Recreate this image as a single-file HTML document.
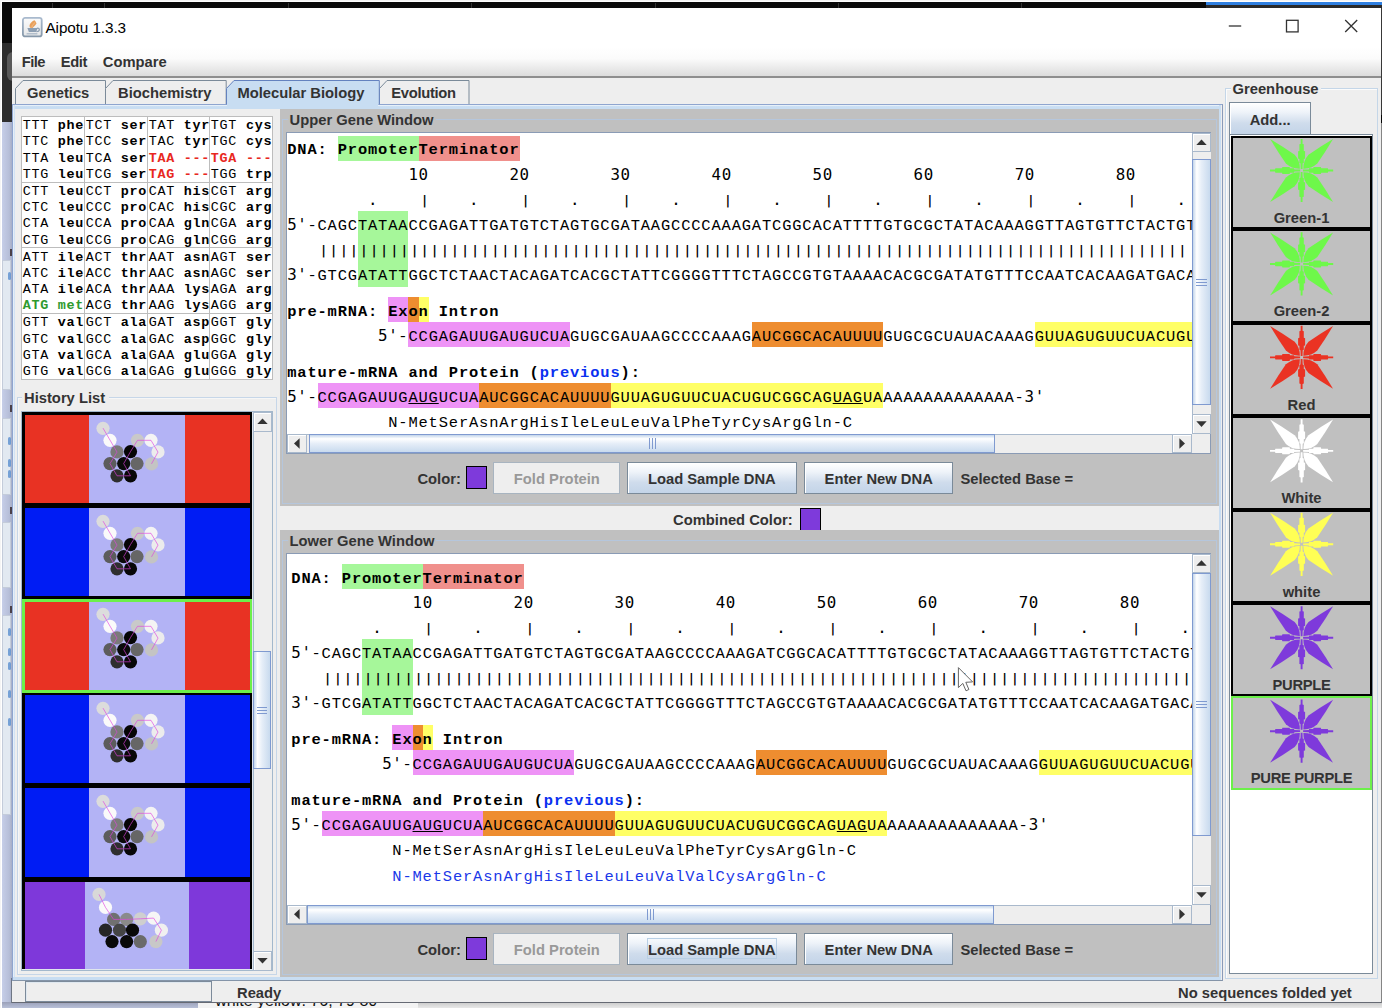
<!DOCTYPE html>
<html><head><meta charset="utf-8"><title>Aipotu 1.3.3</title>
<style>
html,body{margin:0;padding:0}
body{width:1382px;height:1008px;overflow:hidden;position:relative;background:#eee;font-family:"Liberation Sans",sans-serif}
div{position:absolute;box-sizing:border-box}
svg{position:absolute;overflow:visible}
.b{font-weight:bold;font-size:14.75px;color:#333;white-space:nowrap;line-height:18px;height:18px}
.m{font-family:"Liberation Mono",monospace;font-size:15.4px;letter-spacing:0.865px;white-space:pre;color:#000;line-height:25.2px;height:25.2px}
.m b{font-weight:bold}
.m i,.m .k{line-height:0}
.m i{font-style:normal;font-family:"DejaVu Sans Mono","Liberation Mono",monospace;font-size:15.8px;letter-spacing:0.593px}
.m .k{font-weight:bold;font-family:"DejaVu Sans Mono","Liberation Mono",monospace;font-size:12px;letter-spacing:2.880px;position:relative;top:0.2px;left:2.45px}
.c{font-family:"Liberation Mono",monospace;font-size:13.4px;letter-spacing:0.74px;white-space:pre;color:#000;line-height:16.45px;height:16.45px}
.c b{font-weight:bold}
.btn{border:1px solid #7a8a99;background:linear-gradient(#ffffff 0%,#e3ecf6 35%,#c8d8ea 100%);text-align:center}
.btn .b{position:static;display:inline-block}
.hl{}
</style></head>
<body>
<div style="left:0px;top:0px;width:1382px;height:1008px;background:#f5f5f5"></div>
<div style="left:1px;top:1px;width:1381px;height:1.2px;background:#fff"></div>
<div style="left:1px;top:1px;width:1.2px;height:1007px;background:#fff"></div>
<div style="left:2px;top:2px;width:1380px;height:42px;background:#0a0a0a"></div>
<div style="left:1206px;top:5px;width:176px;height:3px;background:#2a2a2a"></div>
<div style="left:1206px;top:2px;width:176px;height:3px;background:#2f7fe0"></div>
<div style="left:52px;top:3px;width:1px;height:5px;background:#333"></div>
<div style="left:104px;top:3px;width:1px;height:5px;background:#333"></div>
<div style="left:288px;top:3px;width:1px;height:5px;background:#333"></div>
<div style="left:471px;top:3px;width:1px;height:5px;background:#333"></div>
<div style="left:655px;top:3px;width:1px;height:5px;background:#333"></div>
<div style="left:838px;top:3px;width:1px;height:5px;background:#333"></div>
<div style="left:1021px;top:3px;width:1px;height:5px;background:#333"></div>
<div style="left:2px;top:43px;width:12px;height:80px;background:#2e2e2e"></div>
<div style="left:7px;top:52px;width:12px;height:29px;background:#5a5a5a;border-radius:14px"></div>
<div style="left:2px;top:122px;width:12px;height:886px;background:linear-gradient(90deg,#c6cee8 0%,#b6bed8 60%,#9aa2ba 100%)"></div>
<div style="left:2.3px;top:260px;width:9px;height:130px;background:#e2e9f1;border:1px solid #c4ccda"></div>
<div style="left:2.3px;top:417.5px;width:9px;height:77.5px;background:#e2e9f1;border:1px solid #c4ccda"></div>
<div style="left:2.3px;top:522px;width:9px;height:66px;background:#e2e9f1;border:1px solid #c4ccda"></div>
<div style="left:2.3px;top:615px;width:9px;height:200px;background:#e2e9f1;border:1px solid #c4ccda"></div>
<div style="left:8px;top:272px;width:3px;height:8px;background:#5a8fd0;border-radius:2px;opacity:0.8"></div>
<div style="left:8px;top:437px;width:3px;height:8px;background:#5a8fd0;border-radius:2px;opacity:0.8"></div>
<div style="left:8px;top:459px;width:3px;height:8px;background:#5a8fd0;border-radius:2px;opacity:0.8"></div>
<div style="left:8px;top:470px;width:3px;height:8px;background:#5a8fd0;border-radius:2px;opacity:0.8"></div>
<div style="left:8px;top:628px;width:3px;height:8px;background:#5a8fd0;border-radius:2px;opacity:0.8"></div>
<div style="left:8px;top:648px;width:3px;height:8px;background:#5a8fd0;border-radius:2px;opacity:0.8"></div>
<div style="left:8px;top:662px;width:3px;height:8px;background:#5a8fd0;border-radius:2px;opacity:0.8"></div>
<div style="left:8px;top:690px;width:3px;height:8px;background:#5a8fd0;border-radius:2px;opacity:0.8"></div>
<div style="left:8px;top:718px;width:3px;height:8px;background:#5a8fd0;border-radius:2px;opacity:0.8"></div>
<div style="left:9.5px;top:249px;width:2px;height:7px;background:#4a4048"></div>
<div style="left:9.5px;top:405px;width:2px;height:7px;background:#4a4048"></div>
<div style="left:9.5px;top:507px;width:2px;height:7px;background:#4a4048"></div>
<div style="left:9.5px;top:606px;width:2px;height:7px;background:#4a4048"></div>
<div style="left:2px;top:1002px;width:1380px;height:6px;background:linear-gradient(#9aa0b8,#b8c0d8)"></div>
<div style="left:198px;top:1002px;width:1184px;height:6px;background:linear-gradient(#c8c8c8,#e8e8e8)"></div>
<div style="left:198px;top:1002px;width:220px;height:6px;background:#f3f3f3"></div>
<div style="left:215.3px;top:992px;font-size:16px;color:#111;white-space:nowrap;line-height:18px">white yellow: 76, 79 80</div>
<div style="left:11.9px;top:8px;width:1370.1px;height:994.6px;background:#eeeeee;border-right:1.4px solid #858585;border-bottom:1.6px solid #666a74"></div>
<div style="left:11.3px;top:978px;width:1.2px;height:25px;background:#6e7684"></div>
<div style="left:12px;top:8px;width:1369px;height:39px;background:#fff"></div>
<svg style="left:21.9px;top:16.5px" width="20.6" height="20.3" viewBox="0 0 20.6 20.3">
<defs><linearGradient id="ig" x1="0" y1="0" x2="0" y2="1"><stop offset="0" stop-color="#fbfbfb"/><stop offset="1" stop-color="#e4e6e8"/></linearGradient>
<linearGradient id="ib" x1="0" y1="0" x2="0" y2="1"><stop offset="0" stop-color="#a9bace"/><stop offset="1" stop-color="#8698aa"/></linearGradient></defs>
<rect x="0.9" y="0.9" width="18.8" height="18.5" rx="2.2" fill="url(#ig)" stroke="url(#ib)" stroke-width="1.8"/>
<path d="M8.2 10.8 C6 8 9.5 4.5 12.4 3.2 C14 4 13.5 5.2 14.6 6.2 C13.5 8.4 11.5 9.8 10.6 11 Z" fill="#e9a05a"/>
<path d="M10 10.2 C9.8 8 12 6.6 13.2 5.4" stroke="#f3c79c" stroke-width="0.7" fill="none"/>
<path d="M5.4 11 H15.6 L14.2 15.1 H6.9 Z" fill="#8d9fb3"/>
<path d="M15 11.3 C18.2 10.6 18.2 14.6 14.4 14.6" stroke="#8d9fb3" stroke-width="1.3" fill="none"/>
<path d="M4.6 16.8 H15.4" stroke="#a7b5c5" stroke-width="1.2"/>
</svg>
<div style="left:45.5px;top:19px;font-size:15.3px;color:#000;white-space:nowrap;line-height:18px;letter-spacing:-0.1px">Aipotu 1.3.3</div>
<svg style="left:1220px;top:8px" width="160" height="38" viewBox="0 0 160 38">
<path d="M8.8 18 H21.2" stroke="#333" stroke-width="1.3"/>
<rect x="66.5" y="12.3" width="11.6" height="11.6" fill="none" stroke="#333" stroke-width="1.3"/>
<path d="M125.2 12 L137.2 24 M137.2 12 L125.2 24" stroke="#333" stroke-width="1.3"/>
</svg>
<div style="left:12px;top:47px;width:1369px;height:30.7px;background:linear-gradient(#ffffff 0%,#fbfbfb 40%,#dcdcdc 100%);border-bottom:2px solid #8e8e8e"></div>
<div class="b" style="left:21.7px;top:52.8px;letter-spacing:-0.55px">File</div>
<div class="b" style="left:60.8px;top:52.8px;letter-spacing:-0.45px">Edit</div>
<div class="b" style="left:102.8px;top:52.8px;">Compare</div>
<div style="left:1380.6px;top:8px;width:1.4px;height:107px;background:#383838"></div>
<div style="left:1380.6px;top:114.7px;width:1.4px;height:8px;background:#050505"></div>
<svg style="left:15px;top:80px" width="91" height="25" viewBox="0 0 91 25"><path d="M0.5 24.5 V8.5 L8 0.5 H90.5 V24.5" fill="#eeeeee" stroke="#7a8a99" stroke-width="1"/></svg>
<div class="b" style="left:27px;top:83.5px;">Genetics</div>
<svg style="left:105px;top:80px" width="121.69999999999999" height="25" viewBox="0 0 121.69999999999999 25"><path d="M0.5 24.5 V8.5 L8 0.5 H121.19999999999999 V24.5" fill="#eeeeee" stroke="#7a8a99" stroke-width="1"/></svg>
<div class="b" style="left:118px;top:83.5px;">Biochemistry</div>
<svg style="left:379px;top:80px" width="90.5" height="25" viewBox="0 0 90.5 25"><path d="M0.5 24.5 V8.5 L8 0.5 H90.0 V24.5" fill="#eeeeee" stroke="#7a8a99" stroke-width="1"/></svg>
<div class="b" style="left:391.3px;top:83.5px;letter-spacing:-0.3px">Evolution</div>
<div style="left:11.8px;top:104px;width:1210.8px;height:877.3px;background:#eeeeee;border:1.4px solid #8fa5cf;border-bottom-color:#8494a8;border-right-color:#8a9ab8"></div>
<div style="left:13.2px;top:105.4px;width:1208px;height:4px;background:linear-gradient(#f4f8fc 0%,#c8ddf2 40%,#c8ddf2 100%)"></div>
<div style="left:13.2px;top:105.4px;width:1.9px;height:874.5px;background:linear-gradient(90deg,#eef4fb,#c8ddf2)"></div>
<div style="left:1218.8px;top:105.4px;width:2.4px;height:874.5px;background:#c8ddf2"></div>
<div style="left:13.2px;top:977px;width:1208px;height:3px;background:#c8ddf2"></div>
<svg style="left:226.2px;top:80px" width="153.8" height="25" viewBox="0 0 153.8 25"><path d="M0.5 24.5 V8.5 L8 0.5 H153.3 V24.5" fill="#c8ddf2" stroke="#6382bf" stroke-width="1"/></svg>
<div class="b" style="left:237.4px;top:83.5px;">Molecular Biology</div>
<div style="left:226.9px;top:103px;width:151.6px;height:3.6px;background:#c8ddf2"></div>
<div style="left:21.1px;top:116.0px;width:251.79999999999998px;height:264.3px;background:#fff;border:1px solid #b8b8b8"></div>
<div style="left:21.1px;top:116.0px;width:63.99999999999999px;height:66.7px;border:1px solid #bdbdbd"></div>
<div class="c" style="left:22.7px;top:118.20px;">TTT <b>phe</b></div>
<div class="c" style="left:22.7px;top:134.40px;">TTC <b>phe</b></div>
<div class="c" style="left:22.7px;top:150.60px;">TTA <b>leu</b></div>
<div class="c" style="left:22.7px;top:166.80px;">TTG <b>leu</b></div>
<div style="left:84.1px;top:116.0px;width:64.0px;height:66.7px;border:1px solid #bdbdbd"></div>
<div class="c" style="left:85.7px;top:118.20px;">TCT <b>ser</b></div>
<div class="c" style="left:85.7px;top:134.40px;">TCC <b>ser</b></div>
<div class="c" style="left:85.7px;top:150.60px;">TCA <b>ser</b></div>
<div class="c" style="left:85.7px;top:166.80px;">TCG <b>ser</b></div>
<div style="left:147.1px;top:116.0px;width:63.099999999999994px;height:66.7px;border:1px solid #bdbdbd"></div>
<div class="c" style="left:148.7px;top:118.20px;">TAT <b>tyr</b></div>
<div class="c" style="left:148.7px;top:134.40px;">TAC <b>tyr</b></div>
<div class="c" style="left:148.7px;top:150.60px;color:#e8281e;"><b>TAA ---</b></div>
<div class="c" style="left:148.7px;top:166.80px;color:#e8281e;"><b>TAG ---</b></div>
<div style="left:209.2px;top:116.0px;width:63.5px;height:66.7px;border:1px solid #bdbdbd"></div>
<div class="c" style="left:210.8px;top:118.20px;">TGT <b>cys</b></div>
<div class="c" style="left:210.8px;top:134.40px;">TGC <b>cys</b></div>
<div class="c" style="left:210.8px;top:150.60px;color:#e8281e;"><b>TGA ---</b></div>
<div class="c" style="left:210.8px;top:166.80px;">TGG <b>trp</b></div>
<div style="left:21.1px;top:181.7px;width:63.99999999999999px;height:66.7px;border:1px solid #bdbdbd"></div>
<div class="c" style="left:22.7px;top:183.90px;">CTT <b>leu</b></div>
<div class="c" style="left:22.7px;top:200.10px;">CTC <b>leu</b></div>
<div class="c" style="left:22.7px;top:216.30px;">CTA <b>leu</b></div>
<div class="c" style="left:22.7px;top:232.50px;">CTG <b>leu</b></div>
<div style="left:84.1px;top:181.7px;width:64.0px;height:66.7px;border:1px solid #bdbdbd"></div>
<div class="c" style="left:85.7px;top:183.90px;">CCT <b>pro</b></div>
<div class="c" style="left:85.7px;top:200.10px;">CCC <b>pro</b></div>
<div class="c" style="left:85.7px;top:216.30px;">CCA <b>pro</b></div>
<div class="c" style="left:85.7px;top:232.50px;">CCG <b>pro</b></div>
<div style="left:147.1px;top:181.7px;width:63.099999999999994px;height:66.7px;border:1px solid #bdbdbd"></div>
<div class="c" style="left:148.7px;top:183.90px;">CAT <b>his</b></div>
<div class="c" style="left:148.7px;top:200.10px;">CAC <b>his</b></div>
<div class="c" style="left:148.7px;top:216.30px;">CAA <b>gln</b></div>
<div class="c" style="left:148.7px;top:232.50px;">CAG <b>gln</b></div>
<div style="left:209.2px;top:181.7px;width:63.5px;height:66.7px;border:1px solid #bdbdbd"></div>
<div class="c" style="left:210.8px;top:183.90px;">CGT <b>arg</b></div>
<div class="c" style="left:210.8px;top:200.10px;">CGC <b>arg</b></div>
<div class="c" style="left:210.8px;top:216.30px;">CGA <b>arg</b></div>
<div class="c" style="left:210.8px;top:232.50px;">CGG <b>arg</b></div>
<div style="left:21.1px;top:247.4px;width:63.99999999999999px;height:66.7px;border:1px solid #bdbdbd"></div>
<div class="c" style="left:22.7px;top:249.60px;">ATT <b>ile</b></div>
<div class="c" style="left:22.7px;top:265.80px;">ATC <b>ile</b></div>
<div class="c" style="left:22.7px;top:282.00px;">ATA <b>ile</b></div>
<div class="c" style="left:22.7px;top:298.20px;color:#2e9a2e;"><b>ATG met</b></div>
<div style="left:84.1px;top:247.4px;width:64.0px;height:66.7px;border:1px solid #bdbdbd"></div>
<div class="c" style="left:85.7px;top:249.60px;">ACT <b>thr</b></div>
<div class="c" style="left:85.7px;top:265.80px;">ACC <b>thr</b></div>
<div class="c" style="left:85.7px;top:282.00px;">ACA <b>thr</b></div>
<div class="c" style="left:85.7px;top:298.20px;">ACG <b>thr</b></div>
<div style="left:147.1px;top:247.4px;width:63.099999999999994px;height:66.7px;border:1px solid #bdbdbd"></div>
<div class="c" style="left:148.7px;top:249.60px;">AAT <b>asn</b></div>
<div class="c" style="left:148.7px;top:265.80px;">AAC <b>asn</b></div>
<div class="c" style="left:148.7px;top:282.00px;">AAA <b>lys</b></div>
<div class="c" style="left:148.7px;top:298.20px;">AAG <b>lys</b></div>
<div style="left:209.2px;top:247.4px;width:63.5px;height:66.7px;border:1px solid #bdbdbd"></div>
<div class="c" style="left:210.8px;top:249.60px;">AGT <b>ser</b></div>
<div class="c" style="left:210.8px;top:265.80px;">AGC <b>ser</b></div>
<div class="c" style="left:210.8px;top:282.00px;">AGA <b>arg</b></div>
<div class="c" style="left:210.8px;top:298.20px;">AGG <b>arg</b></div>
<div style="left:21.1px;top:313.1px;width:63.99999999999999px;height:66.7px;border:1px solid #bdbdbd"></div>
<div class="c" style="left:22.7px;top:315.30px;">GTT <b>val</b></div>
<div class="c" style="left:22.7px;top:331.50px;">GTC <b>val</b></div>
<div class="c" style="left:22.7px;top:347.70px;">GTA <b>val</b></div>
<div class="c" style="left:22.7px;top:363.90px;">GTG <b>val</b></div>
<div style="left:84.1px;top:313.1px;width:64.0px;height:66.7px;border:1px solid #bdbdbd"></div>
<div class="c" style="left:85.7px;top:315.30px;">GCT <b>ala</b></div>
<div class="c" style="left:85.7px;top:331.50px;">GCC <b>ala</b></div>
<div class="c" style="left:85.7px;top:347.70px;">GCA <b>ala</b></div>
<div class="c" style="left:85.7px;top:363.90px;">GCG <b>ala</b></div>
<div style="left:147.1px;top:313.1px;width:63.099999999999994px;height:66.7px;border:1px solid #bdbdbd"></div>
<div class="c" style="left:148.7px;top:315.30px;">GAT <b>asp</b></div>
<div class="c" style="left:148.7px;top:331.50px;">GAC <b>asp</b></div>
<div class="c" style="left:148.7px;top:347.70px;">GAA <b>glu</b></div>
<div class="c" style="left:148.7px;top:363.90px;">GAG <b>glu</b></div>
<div style="left:209.2px;top:313.1px;width:63.5px;height:66.7px;border:1px solid #bdbdbd"></div>
<div class="c" style="left:210.8px;top:315.30px;">GGT <b>gly</b></div>
<div class="c" style="left:210.8px;top:331.50px;">GGC <b>gly</b></div>
<div class="c" style="left:210.8px;top:347.70px;">GGA <b>gly</b></div>
<div class="c" style="left:210.8px;top:363.90px;">GGG <b>gly</b></div>
<div style="left:17.3px;top:396.8px;width:260px;height:578.5px;border:1.5px solid #c6d6e8;box-shadow:inset 1px 1px 0 #f6f6f6"></div>
<div style="left:22px;top:388px;width:87px;height:18px;background:#eee"></div>
<div class="b" style="left:24px;top:388.5px;">History List</div>
<div style="left:21px;top:411px;width:252px;height:560px;background:#dfe6ee;border:1px solid #a3b8cc"></div>
<div style="left:21.6px;top:412.3px;width:230.4px;height:557.2px;background:#000"></div>
<div style="left:24.8px;top:414.95px;width:225.2px;height:88.10000000000002px;background:#e83223"></div>
<div style="left:89.3px;top:414.95px;width:95.7px;height:88.10000000000002px;background:#b3b3f5"></div>
<svg style="left:89px;top:414.9px" width="97" height="88.1"><circle cx="14.0" cy="13.3" r="6.6" fill="#dcdcdc"/><circle cx="21.0" cy="25.3" r="6.6" fill="#fafafa"/><circle cx="48.5" cy="25.3" r="6.6" fill="#c9c9c9"/><circle cx="62.0" cy="25.3" r="6.6" fill="#f4f4f4"/><circle cx="28.0" cy="36.9" r="6.6" fill="#7a7a7a"/><circle cx="41.5" cy="36.6" r="6.6" fill="#050505"/><circle cx="69.0" cy="36.9" r="6.6" fill="#ececec"/><circle cx="21.0" cy="48.6" r="6.6" fill="#5c5c5c"/><circle cx="34.7" cy="48.6" r="6.6" fill="#0a0a0a"/><circle cx="48.0" cy="48.6" r="6.6" fill="#666"/><circle cx="62.5" cy="48.9" r="6.6" fill="#c4c4c4"/><circle cx="28.0" cy="60.8" r="6.6" fill="#2e2e2e"/><circle cx="41.5" cy="60.8" r="6.6" fill="#080808"/><polyline points="14.0,13.1 21.0,25.1 28.0,37.1 21.0,48.6 28.0,60.8 41.5,60.8 34.7,48.6 41.5,36.6 48.5,25.3 62.0,25.3 69.0,37.1 62.5,48.9" fill="none" stroke="#e040e0" stroke-width="0.8" opacity="0.8"/></svg>
<div style="left:24.8px;top:507.95px;width:225.2px;height:88.30000000000001px;background:#001cf4"></div>
<div style="left:89.3px;top:507.95px;width:95.7px;height:88.30000000000001px;background:#b3b3f5"></div>
<svg style="left:89px;top:507.9px" width="97" height="88.3"><circle cx="14.0" cy="13.3" r="6.6" fill="#dcdcdc"/><circle cx="21.0" cy="25.3" r="6.6" fill="#fafafa"/><circle cx="48.5" cy="25.3" r="6.6" fill="#c9c9c9"/><circle cx="62.0" cy="25.3" r="6.6" fill="#f4f4f4"/><circle cx="28.0" cy="36.9" r="6.6" fill="#7a7a7a"/><circle cx="41.5" cy="36.6" r="6.6" fill="#050505"/><circle cx="69.0" cy="36.9" r="6.6" fill="#ececec"/><circle cx="21.0" cy="48.6" r="6.6" fill="#5c5c5c"/><circle cx="34.7" cy="48.6" r="6.6" fill="#0a0a0a"/><circle cx="48.0" cy="48.6" r="6.6" fill="#666"/><circle cx="62.5" cy="48.9" r="6.6" fill="#c4c4c4"/><circle cx="28.0" cy="60.8" r="6.6" fill="#2e2e2e"/><circle cx="41.5" cy="60.8" r="6.6" fill="#080808"/><polyline points="14.0,13.1 21.0,25.1 28.0,37.1 21.0,48.6 28.0,60.8 41.5,60.8 34.7,48.6 41.5,36.6 48.5,25.3 62.0,25.3 69.0,37.1 62.5,48.9" fill="none" stroke="#e040e0" stroke-width="0.8" opacity="0.8"/></svg>
<div style="left:21.6px;top:598.7px;width:230.4px;height:94.0px;background:#6cf04a"></div>
<div style="left:24.8px;top:601.7px;width:225.2px;height:88.0px;background:#e83223"></div>
<div style="left:89.3px;top:601.7px;width:95.7px;height:88.0px;background:#b3b3f5"></div>
<svg style="left:89px;top:601.1px" width="97" height="88.0"><circle cx="14.0" cy="13.3" r="6.6" fill="#dcdcdc"/><circle cx="21.0" cy="25.3" r="6.6" fill="#fafafa"/><circle cx="48.5" cy="25.3" r="6.6" fill="#c9c9c9"/><circle cx="62.0" cy="25.3" r="6.6" fill="#f4f4f4"/><circle cx="28.0" cy="36.9" r="6.6" fill="#7a7a7a"/><circle cx="41.5" cy="36.6" r="6.6" fill="#050505"/><circle cx="69.0" cy="36.9" r="6.6" fill="#ececec"/><circle cx="21.0" cy="48.6" r="6.6" fill="#5c5c5c"/><circle cx="34.7" cy="48.6" r="6.6" fill="#0a0a0a"/><circle cx="48.0" cy="48.6" r="6.6" fill="#666"/><circle cx="62.5" cy="48.9" r="6.6" fill="#c4c4c4"/><circle cx="28.0" cy="60.8" r="6.6" fill="#2e2e2e"/><circle cx="41.5" cy="60.8" r="6.6" fill="#080808"/><polyline points="14.0,13.1 21.0,25.1 28.0,37.1 21.0,48.6 28.0,60.8 41.5,60.8 34.7,48.6 41.5,36.6 48.5,25.3 62.0,25.3 69.0,37.1 62.5,48.9" fill="none" stroke="#e040e0" stroke-width="0.8" opacity="0.8"/></svg>
<div style="left:24.8px;top:695.1500000000001px;width:225.2px;height:88.09999999999991px;background:#001cf4"></div>
<div style="left:89.3px;top:695.1500000000001px;width:95.7px;height:88.09999999999991px;background:#b3b3f5"></div>
<svg style="left:89px;top:695.1px" width="97" height="88.1"><circle cx="14.0" cy="13.3" r="6.6" fill="#dcdcdc"/><circle cx="21.0" cy="25.3" r="6.6" fill="#fafafa"/><circle cx="48.5" cy="25.3" r="6.6" fill="#c9c9c9"/><circle cx="62.0" cy="25.3" r="6.6" fill="#f4f4f4"/><circle cx="28.0" cy="36.9" r="6.6" fill="#7a7a7a"/><circle cx="41.5" cy="36.6" r="6.6" fill="#050505"/><circle cx="69.0" cy="36.9" r="6.6" fill="#ececec"/><circle cx="21.0" cy="48.6" r="6.6" fill="#5c5c5c"/><circle cx="34.7" cy="48.6" r="6.6" fill="#0a0a0a"/><circle cx="48.0" cy="48.6" r="6.6" fill="#666"/><circle cx="62.5" cy="48.9" r="6.6" fill="#c4c4c4"/><circle cx="28.0" cy="60.8" r="6.6" fill="#2e2e2e"/><circle cx="41.5" cy="60.8" r="6.6" fill="#080808"/><polyline points="14.0,13.1 21.0,25.1 28.0,37.1 21.0,48.6 28.0,60.8 41.5,60.8 34.7,48.6 41.5,36.6 48.5,25.3 62.0,25.3 69.0,37.1 62.5,48.9" fill="none" stroke="#e040e0" stroke-width="0.8" opacity="0.8"/></svg>
<div style="left:24.8px;top:788.1500000000001px;width:225.2px;height:88.59999999999991px;background:#001cf4"></div>
<div style="left:89.3px;top:788.1500000000001px;width:95.7px;height:88.59999999999991px;background:#b3b3f5"></div>
<svg style="left:89px;top:788.1px" width="97" height="88.6"><circle cx="14.0" cy="13.3" r="6.6" fill="#dcdcdc"/><circle cx="21.0" cy="25.3" r="6.6" fill="#fafafa"/><circle cx="48.5" cy="25.3" r="6.6" fill="#c9c9c9"/><circle cx="62.0" cy="25.3" r="6.6" fill="#f4f4f4"/><circle cx="28.0" cy="36.9" r="6.6" fill="#7a7a7a"/><circle cx="41.5" cy="36.6" r="6.6" fill="#050505"/><circle cx="69.0" cy="36.9" r="6.6" fill="#ececec"/><circle cx="21.0" cy="48.6" r="6.6" fill="#5c5c5c"/><circle cx="34.7" cy="48.6" r="6.6" fill="#0a0a0a"/><circle cx="48.0" cy="48.6" r="6.6" fill="#666"/><circle cx="62.5" cy="48.9" r="6.6" fill="#c4c4c4"/><circle cx="28.0" cy="60.8" r="6.6" fill="#2e2e2e"/><circle cx="41.5" cy="60.8" r="6.6" fill="#080808"/><polyline points="14.0,13.1 21.0,25.1 28.0,37.1 21.0,48.6 28.0,60.8 41.5,60.8 34.7,48.6 41.5,36.6 48.5,25.3 62.0,25.3 69.0,37.1 62.5,48.9" fill="none" stroke="#e040e0" stroke-width="0.8" opacity="0.8"/></svg>
<div style="left:24.8px;top:881.6500000000001px;width:225.2px;height:87.84999999999991px;background:#7e38da"></div>
<div style="left:85.3px;top:881.6500000000001px;width:103.4px;height:87.84999999999991px;background:#b3b3f5"></div>
<svg style="left:85.3px;top:880.3px" width="104" height="87.8"><circle cx="14.0" cy="14.4" r="6.6" fill="#d8d8d8"/><circle cx="20.5" cy="27.4" r="6.6" fill="#fafafa"/><circle cx="28.6" cy="39.4" r="6.6" fill="#707070"/><circle cx="41.6" cy="39.4" r="6.6" fill="#8a8a8a"/><circle cx="55.3" cy="38.8" r="6.6" fill="#cfcfcf"/><circle cx="68.6" cy="38.1" r="6.6" fill="#f6f6f6"/><circle cx="76.4" cy="50.2" r="6.6" fill="#f0f0f0"/><circle cx="70.9" cy="61.6" r="6.6" fill="#c8c8c8"/><circle cx="55.3" cy="61.6" r="6.6" fill="#6a6a6a"/><circle cx="41.6" cy="61.6" r="6.6" fill="#0a0a0a"/><circle cx="27.0" cy="61.6" r="6.6" fill="#0a0a0a"/><circle cx="20.5" cy="50.2" r="6.6" fill="#262626"/><circle cx="34.5" cy="50.2" r="6.6" fill="#444"/><circle cx="47.5" cy="50.2" r="6.6" fill="#080808"/><polyline points="14.0,14.4 20.5,27.4 28.6,39.4 41.6,39.4 55.3,38.8 68.6,38.1 76.4,50.2 70.9,61.6" fill="none" stroke="#e040e0" stroke-width="0.8" opacity="0.8"/></svg>
<div style="left:253px;top:412px;width:19px;height:558px;background:#eeeeee;border-left:1px solid #a3b8cc"></div>
<div style="left:253px;top:411.5px;width:19px;height:20px;background:#eeeeee;border:1px solid #a9b9cc;box-shadow:inset 1px 1px 0 #fff"></div>
<svg style="left:0;top:0" width="1382" height="1008"><polygon points="257.3,424.1 267.7,424.1 262.5,418.5" fill="#333"/></svg>
<div style="left:253px;top:950.5px;width:19px;height:20px;background:#eeeeee;border:1px solid #a9b9cc;box-shadow:inset 1px 1px 0 #fff"></div>
<svg style="left:0;top:0" width="1382" height="1008"><polygon points="257.3,957.9 267.7,957.9 262.5,963.5" fill="#333"/></svg>
<div style="left:252.7px;top:651px;width:18.8px;height:118px;background:linear-gradient(90deg,#c3d5ea 0%,#ffffff 22%,#e6eef8 50%,#c8daee 100%);border:1px solid #7f9ad0"></div>
<div style="left:256.7px;top:707.0px;width:10.8px;height:1px;background:#7f9ad0"></div>
<div style="left:256.7px;top:710.0px;width:10.8px;height:1px;background:#7f9ad0"></div>
<div style="left:256.7px;top:713.0px;width:10.8px;height:1px;background:#7f9ad0"></div>
<div style="left:280px;top:109.2px;width:938.8px;height:396.8px;background:#c0c0c0"></div>
<div style="left:282.1px;top:118.8px;width:934.6px;height:385.40000000000003px;border:1.8px solid #b5c6dc"></div>
<div style="left:288px;top:111.2px;width:148px;height:17px;background:#c0c0c0"></div>
<div class="b" style="left:289.5px;top:111.4px;">Upper Gene Window</div>
<div style="left:286px;top:131.7px;width:925.4px;height:322px;background:#eee;border:1.2px solid #8a9bb5"></div>
<div style="left:287px;top:132.7px;width:905px;height:301px;background:#fff;overflow:hidden"><div style="left:50.72px;top:3.2px;width:80.84px;height:25.3px;background:#a6f79a"></div><div style="left:131.56px;top:3.2px;width:101.05px;height:25.3px;background:#f0908c"></div><div class="m" style="left:0.20px;top:5.8px"><b>DNA: PromoterTerminator</b></div><div class="m" style="left:0.20px;top:30.9px"><i>            10        20        30        40        50        60        70        80</i></div><div class="m" style="left:0.20px;top:56.0px"><i>        .    <span class="k">|</span>    .    <span class="k">|</span>    .    <span class="k">|</span>    .    <span class="k">|</span>    .    <span class="k">|</span>    .    <span class="k">|</span>    .    <span class="k">|</span>    .    <span class="k">|</span>    .    <span class="k">|</span></i></div><div style="left:70.93px;top:78.6px;width:50.53px;height:75.5px;background:#a6f79a"></div><div class="m" style="left:0.20px;top:81.2px"><i>5'</i>-CAGCTATAACCGAGATTGATGTCTAGTGCGATAAGCCCCAAAGATCGGCACATTTTGTGCGCTATACAAAGGTTAGTGTTCTACTGTCGGCAGTAGTA</div><div class="m" style="left:0.20px;top:106.3px">   <span class="k">||||||||||||||||||||||||||||||||||||||||||||||||||||||||||||||||||||||||||||||||||||||</span></div><div class="m" style="left:0.20px;top:131.4px"><i>3'</i>-GTCGATATTGGCTCTAACTACAGATCACGCTATTCGGGGTTTCTAGCCGTGTAAAACACGCGATATGTTTCCAATCACAAGATGACAGCCGTCATCAT</div><div style="left:101.25px;top:164.3px;width:20.21px;height:25.3px;background:#ee93f6"></div><div style="left:121.46px;top:164.3px;width:10.11px;height:25.3px;background:#ee8d30"></div><div style="left:131.56px;top:164.3px;width:10.11px;height:25.3px;background:#ffff66"></div><div class="m" style="left:0.20px;top:166.9px"><b>pre-mRNA: Exon Intron</b></div><div style="left:121.46px;top:189.3px;width:161.68px;height:25.3px;background:#ee93f6"></div><div style="left:465.03px;top:189.3px;width:131.37px;height:25.3px;background:#ee8d30"></div><div style="left:747.97px;top:189.3px;width:272.84px;height:25.3px;background:#ffff66"></div><div class="m" style="left:0.20px;top:191.9px">         <i>5'</i>-CCGAGAUUGAUGUCUAGUGCGAUAAGCCCCAAAGAUCGGCACAUUUUGUGCGCUAUACAAAGGUUAGUGUUCUACUGUCGGCAGUAGUA</div><div class="m" style="left:0.20px;top:228.2px"><b>mature-mRNA and Protein (<span style="color:#0a30f0">previous</span>):</b></div><div style="left:30.51px;top:250.4px;width:161.68px;height:25.3px;background:#ee93f6"></div><div style="left:192.19px;top:250.4px;width:131.37px;height:25.3px;background:#ee8d30"></div><div style="left:323.56px;top:250.4px;width:272.84px;height:25.3px;background:#ffff66"></div><div class="m" style="left:0.20px;top:253.0px"><i>5'</i>-CCGAGAUUG<u>AUG</u>UCUAAUCGGCACAUUUUGUUAGUGUUCUACUGUCGGCAG<u>UAG</u>UAAAAAAAAAAAAAA-<i>3'</i></div><div class="m" style="left:0.20px;top:278.3px">          N-MetSerAsnArgHisIleLeuLeuValPheTyrCysArgGln-C</div></div>
<div style="left:1192px;top:132.7px;width:19px;height:301px;background:#eeeeee;border-left:1px solid #a9b9cc"></div>
<div style="left:287px;top:433.7px;width:905px;height:19.5px;background:#eeeeee;border-top:1px solid #a9b9cc"></div>
<div style="left:1192px;top:132.7px;width:19px;height:19.5px;background:#eeeeee;border:1px solid #a9b9cc;box-shadow:inset 1px 1px 0 #fff"></div>
<svg style="left:0;top:0" width="1382" height="1008"><polygon points="1196.3,145.04999999999998 1206.7,145.04999999999998 1201.5,139.45" fill="#333"/></svg>
<div style="left:1192px;top:414.2px;width:19px;height:19.5px;background:#eeeeee;border:1px solid #a9b9cc;box-shadow:inset 1px 1px 0 #fff"></div>
<svg style="left:0;top:0" width="1382" height="1008"><polygon points="1196.3,421.34999999999997 1206.7,421.34999999999997 1201.5,426.95" fill="#333"/></svg>
<div style="left:287px;top:433.7px;width:20px;height:19.5px;background:#eeeeee;border:1px solid #a9b9cc;box-shadow:inset 1px 1px 0 #fff"></div>
<svg style="left:0;top:0" width="1382" height="1008"><polygon points="299.6,438.25 299.6,448.65 294.0,443.45" fill="#333"/></svg>
<div style="left:1172px;top:433.7px;width:20px;height:19.5px;background:#eeeeee;border:1px solid #a9b9cc;box-shadow:inset 1px 1px 0 #fff"></div>
<svg style="left:0;top:0" width="1382" height="1008"><polygon points="1179.4,438.25 1179.4,448.65 1185.0,443.45" fill="#333"/></svg>
<div style="left:1192px;top:159px;width:19px;height:246px;background:linear-gradient(90deg,#c3d5ea 0%,#ffffff 22%,#e6eef8 50%,#c8daee 100%);border:1px solid #7f9ad0"></div>
<div style="left:1196px;top:279.0px;width:11px;height:1px;background:#7f9ad0"></div>
<div style="left:1196px;top:282.0px;width:11px;height:1px;background:#7f9ad0"></div>
<div style="left:1196px;top:285.0px;width:11px;height:1px;background:#7f9ad0"></div>
<div style="left:309px;top:434.2px;width:686px;height:19px;background:linear-gradient(180deg,#c3d5ea 0%,#ffffff 22%,#e6eef8 50%,#c8daee 100%);border:1px solid #7f9ad0"></div>
<div style="left:649.0px;top:438.2px;width:1px;height:11px;background:#7f9ad0"></div>
<div style="left:652.0px;top:438.2px;width:1px;height:11px;background:#7f9ad0"></div>
<div style="left:655.0px;top:438.2px;width:1px;height:11px;background:#7f9ad0"></div>
<div class="b" style="left:417.4px;top:469.8px;">Color:</div>
<div style="left:465.7px;top:466.2px;width:21.2px;height:23.2px;background:#7e3adb;border:1px solid #000"></div>
<div style="left:493.2px;top:461.8px;width:127.3px;height:32px;background:#eeeeee;border:1px solid #a8b4c0"></div>
<div class="b" style="left:493.2px;top:469.8px;width:127.3px;text-align:center;color:#999">Fold Protein</div>
<div style="left:626.6px;top:461.8px;width:170.5px;height:32px;background:linear-gradient(#ffffff 0%,#eef3f9 30%,#cfdcec 65%,#c3d4e8 100%);border:1px solid #7a8a99;box-shadow:inset 1px 1px 0 #fff"></div>
<div class="b" style="left:626.6px;top:469.8px;width:170.5px;text-align:center">Load Sample DNA</div>
<div style="left:804px;top:461.8px;width:149.4px;height:32px;background:linear-gradient(#ffffff 0%,#eef3f9 30%,#cfdcec 65%,#c3d4e8 100%);border:1px solid #7a8a99;box-shadow:inset 1px 1px 0 #fff"></div>
<div class="b" style="left:804px;top:469.8px;width:149.4px;text-align:center">Enter New DNA</div>
<div class="b" style="left:960.4px;top:469.8px;">Selected Base =</div>
<div class="b" style="left:673px;top:511px;">Combined Color:</div>
<div style="left:799.5px;top:508px;width:21.5px;height:22.5px;background:#7e3adb;border:1px solid #000"></div>
<div style="left:280px;top:530px;width:938.8px;height:447px;background:#c0c0c0"></div>
<div style="left:282.1px;top:539.6px;width:934.6px;height:435.6px;border:1.8px solid #b5c6dc"></div>
<div style="left:288px;top:532px;width:148px;height:17px;background:#c0c0c0"></div>
<div class="b" style="left:289.5px;top:532.2px;">Lower Gene Window</div>
<div style="left:286px;top:552.5px;width:925.4px;height:372px;background:#eee;border:1.2px solid #8a9bb5"></div>
<div style="left:287px;top:553.5px;width:905px;height:351px;background:#fff;overflow:hidden"><div style="left:54.83px;top:10.5px;width:80.84px;height:25.3px;background:#a6f79a"></div><div style="left:135.67px;top:10.5px;width:101.05px;height:25.3px;background:#f0908c"></div><div class="m" style="left:4.30px;top:13.1px"><b>DNA: PromoterTerminator</b></div><div class="m" style="left:4.30px;top:38.2px"><i>            10        20        30        40        50        60        70        80</i></div><div class="m" style="left:4.30px;top:63.3px"><i>        .    <span class="k">|</span>    .    <span class="k">|</span>    .    <span class="k">|</span>    .    <span class="k">|</span>    .    <span class="k">|</span>    .    <span class="k">|</span>    .    <span class="k">|</span>    .    <span class="k">|</span>    .    <span class="k">|</span></i></div><div style="left:75.04px;top:85.9px;width:50.53px;height:75.5px;background:#a6f79a"></div><div class="m" style="left:4.30px;top:88.5px"><i>5'</i>-CAGCTATAACCGAGATTGATGTCTAGTGCGATAAGCCCCAAAGATCGGCACATTTTGTGCGCTATACAAAGGTTAGTGTTCTACTGTCGGCAGTAGTA</div><div class="m" style="left:4.30px;top:113.6px">   <span class="k">||||||||||||||||||||||||||||||||||||||||||||||||||||||||||||||||||||||||||||||||||||||</span></div><div class="m" style="left:4.30px;top:138.7px"><i>3'</i>-GTCGATATTGGCTCTAACTACAGATCACGCTATTCGGGGTTTCTAGCCGTGTAAAACACGCGATATGTTTCCAATCACAAGATGACAGCCGTCATCAT</div><div style="left:105.35px;top:171.6px;width:20.21px;height:25.3px;background:#ee93f6"></div><div style="left:125.56px;top:171.6px;width:10.11px;height:25.3px;background:#ee8d30"></div><div style="left:135.67px;top:171.6px;width:10.11px;height:25.3px;background:#ffff66"></div><div class="m" style="left:4.30px;top:174.2px"><b>pre-mRNA: Exon Intron</b></div><div style="left:125.56px;top:196.6px;width:161.68px;height:25.3px;background:#ee93f6"></div><div style="left:469.13px;top:196.6px;width:131.37px;height:25.3px;background:#ee8d30"></div><div style="left:752.07px;top:196.6px;width:272.84px;height:25.3px;background:#ffff66"></div><div class="m" style="left:4.30px;top:199.2px">         <i>5'</i>-CCGAGAUUGAUGUCUAGUGCGAUAAGCCCCAAAGAUCGGCACAUUUUGUGCGCUAUACAAAGGUUAGUGUUCUACUGUCGGCAGUAGUA</div><div class="m" style="left:4.30px;top:235.5px"><b>mature-mRNA and Protein (<span style="color:#0a30f0">previous</span>):</b></div><div style="left:34.62px;top:257.7px;width:161.68px;height:25.3px;background:#ee93f6"></div><div style="left:196.30px;top:257.7px;width:131.37px;height:25.3px;background:#ee8d30"></div><div style="left:327.66px;top:257.7px;width:272.84px;height:25.3px;background:#ffff66"></div><div class="m" style="left:4.30px;top:260.3px"><i>5'</i>-CCGAGAUUG<u>AUG</u>UCUAAUCGGCACAUUUUGUUAGUGUUCUACUGUCGGCAG<u>UAG</u>UAAAAAAAAAAAAAA-<i>3'</i></div><div class="m" style="left:4.30px;top:285.6px">          N-MetSerAsnArgHisIleLeuLeuValPheTyrCysArgGln-C</div><div class="m" style="left:4.30px;top:311.0px"><span style="color:#1a38e8">          N-MetSerAsnArgHisIleLeuLeuValValCysArgGln-C</span></div></div>
<div style="left:1192px;top:553.5px;width:19px;height:351px;background:#eeeeee;border-left:1px solid #a9b9cc"></div>
<div style="left:287px;top:904.5px;width:905px;height:19.5px;background:#eeeeee;border-top:1px solid #a9b9cc"></div>
<div style="left:1192px;top:553.5px;width:19px;height:19.5px;background:#eeeeee;border:1px solid #a9b9cc;box-shadow:inset 1px 1px 0 #fff"></div>
<svg style="left:0;top:0" width="1382" height="1008"><polygon points="1196.3,565.85 1206.7,565.85 1201.5,560.25" fill="#333"/></svg>
<div style="left:1192px;top:885.0px;width:19px;height:19.5px;background:#eeeeee;border:1px solid #a9b9cc;box-shadow:inset 1px 1px 0 #fff"></div>
<svg style="left:0;top:0" width="1382" height="1008"><polygon points="1196.3,892.15 1206.7,892.15 1201.5,897.75" fill="#333"/></svg>
<div style="left:287px;top:904.5px;width:20px;height:19.5px;background:#eeeeee;border:1px solid #a9b9cc;box-shadow:inset 1px 1px 0 #fff"></div>
<svg style="left:0;top:0" width="1382" height="1008"><polygon points="299.6,909.05 299.6,919.45 294.0,914.25" fill="#333"/></svg>
<div style="left:1172px;top:904.5px;width:20px;height:19.5px;background:#eeeeee;border:1px solid #a9b9cc;box-shadow:inset 1px 1px 0 #fff"></div>
<svg style="left:0;top:0" width="1382" height="1008"><polygon points="1179.4,909.05 1179.4,919.45 1185.0,914.25" fill="#333"/></svg>
<div style="left:1192px;top:572.5px;width:19px;height:263px;background:linear-gradient(90deg,#c3d5ea 0%,#ffffff 22%,#e6eef8 50%,#c8daee 100%);border:1px solid #7f9ad0"></div>
<div style="left:1196px;top:701.0px;width:11px;height:1px;background:#7f9ad0"></div>
<div style="left:1196px;top:704.0px;width:11px;height:1px;background:#7f9ad0"></div>
<div style="left:1196px;top:707.0px;width:11px;height:1px;background:#7f9ad0"></div>
<div style="left:307.3px;top:905.0px;width:686.3px;height:19px;background:linear-gradient(180deg,#c3d5ea 0%,#ffffff 22%,#e6eef8 50%,#c8daee 100%);border:1px solid #7f9ad0"></div>
<div style="left:647.45px;top:909.0px;width:1px;height:11px;background:#7f9ad0"></div>
<div style="left:650.45px;top:909.0px;width:1px;height:11px;background:#7f9ad0"></div>
<div style="left:653.45px;top:909.0px;width:1px;height:11px;background:#7f9ad0"></div>
<div class="b" style="left:417.4px;top:940.5px;">Color:</div>
<div style="left:465.7px;top:936.9px;width:21.2px;height:23.2px;background:#7e3adb;border:1px solid #000"></div>
<div style="left:493.2px;top:932.5px;width:127.3px;height:32px;background:#eeeeee;border:1px solid #a8b4c0"></div>
<div class="b" style="left:493.2px;top:940.5px;width:127.3px;text-align:center;color:#999">Fold Protein</div>
<div style="left:626.6px;top:932.5px;width:170.5px;height:32px;background:linear-gradient(#ffffff 0%,#eef3f9 30%,#cfdcec 65%,#c3d4e8 100%);border:1px solid #7a8a99;box-shadow:inset 1px 1px 0 #fff"></div>
<div class="b" style="left:626.6px;top:940.5px;width:170.5px;text-align:center">Load Sample DNA</div>
<div style="left:646.6px;top:937.5px;width:130.5px;height:21px;border:1px solid #b8cfe5"></div>
<div style="left:804px;top:932.5px;width:149.4px;height:32px;background:linear-gradient(#ffffff 0%,#eef3f9 30%,#cfdcec 65%,#c3d4e8 100%);border:1px solid #7a8a99;box-shadow:inset 1px 1px 0 #fff"></div>
<div class="b" style="left:804px;top:940.5px;width:149.4px;text-align:center">Enter New DNA</div>
<div class="b" style="left:960.4px;top:940.5px;">Selected Base =</div>
<div style="left:1225.3px;top:88px;width:152.6px;height:890.5px;border:1.4px solid #c4d6e8;box-shadow:inset 1px 1px 0 #fbfbfb"></div>
<div style="left:1231px;top:80px;width:90px;height:17px;background:#eee"></div>
<div class="b" style="left:1232.5px;top:79.5px;">Greenhouse</div>
<div style="left:1229.3px;top:102px;width:81.7px;height:33px;background:linear-gradient(#ffffff 0%,#eef3f9 30%,#cfdcec 65%,#c3d4e8 100%);border:1px solid #7a8a99;box-shadow:inset 1px 1px 0 #fff"></div>
<div class="b" style="left:1229.3px;top:110.5px;width:81.7px;text-align:center">Add...</div>
<div style="left:1229.2px;top:134.4px;width:143.8px;height:839.4px;background:#fff;border:1.3px solid #7a8a99"></div>
<div style="left:1230.8px;top:135.7px;width:141.4px;height:93.55px;background:#c0c0c0;border:2.7px solid #000"></div>
<svg style="left:0;top:0" width="1382" height="1008"><path transform="translate(1301.6,170.5) rotate(45)" d="M2.5,0 Q8,-5.8 16,-6.2 Q30,-3.7 44.5,0 Q30,3.7 16,6.2 Q8,5.8 2.5,0Z" fill="#6ef84a"/><path transform="translate(1301.6,170.5) rotate(135)" d="M2.5,0 Q8,-5.8 16,-6.2 Q30,-3.7 44.5,0 Q30,3.7 16,6.2 Q8,5.8 2.5,0Z" fill="#6ef84a"/><path transform="translate(1301.6,170.5) rotate(225)" d="M2.5,0 Q8,-5.8 16,-6.2 Q30,-3.7 44.5,0 Q30,3.7 16,6.2 Q8,5.8 2.5,0Z" fill="#6ef84a"/><path transform="translate(1301.6,170.5) rotate(315)" d="M2.5,0 Q8,-5.8 16,-6.2 Q30,-3.7 44.5,0 Q30,3.7 16,6.2 Q8,5.8 2.5,0Z" fill="#6ef84a"/><polygon transform="translate(1301.6,170.5) rotate(0)" points="1.5,-0.9 7.2,-1.1 7.6,-2.2 11.6,-2.2 12,-3.5 19.2,-3.5 19.6,-2.2 26.2,-2.2 26.6,-0.95 31.6,-0.95 31.6,0.95 26.6,0.95 26.2,2.2 19.6,2.2 19.2,3.5 12,3.5 11.6,2.2 7.6,2.2 7.2,1.1 1.5,0.9" fill="#6ef84a"/><polygon transform="translate(1301.6,170.5) rotate(90)" points="1.5,-0.9 7.2,-1.1 7.6,-2.2 11.6,-2.2 12,-3.5 19.2,-3.5 19.6,-2.2 26.2,-2.2 26.6,-0.95 31.6,-0.95 31.6,0.95 26.6,0.95 26.2,2.2 19.6,2.2 19.2,3.5 12,3.5 11.6,2.2 7.6,2.2 7.2,1.1 1.5,0.9" fill="#6ef84a"/><polygon transform="translate(1301.6,170.5) rotate(180)" points="1.5,-0.9 7.2,-1.1 7.6,-2.2 11.6,-2.2 12,-3.5 19.2,-3.5 19.6,-2.2 26.2,-2.2 26.6,-0.95 31.6,-0.95 31.6,0.95 26.6,0.95 26.2,2.2 19.6,2.2 19.2,3.5 12,3.5 11.6,2.2 7.6,2.2 7.2,1.1 1.5,0.9" fill="#6ef84a"/><polygon transform="translate(1301.6,170.5) rotate(270)" points="1.5,-0.9 7.2,-1.1 7.6,-2.2 11.6,-2.2 12,-3.5 19.2,-3.5 19.6,-2.2 26.2,-2.2 26.6,-0.95 31.6,-0.95 31.6,0.95 26.6,0.95 26.2,2.2 19.6,2.2 19.2,3.5 12,3.5 11.6,2.2 7.6,2.2 7.2,1.1 1.5,0.9" fill="#6ef84a"/></svg>
<div class="b" style="left:1232px;top:208.7px;width:139px;text-align:center;">Green-1</div>
<div style="left:1230.8px;top:229.14999999999998px;width:141.4px;height:93.55px;background:#c0c0c0;border:2.7px solid #000"></div>
<svg style="left:0;top:0" width="1382" height="1008"><path transform="translate(1301.6,263.95) rotate(45)" d="M2.5,0 Q8,-5.8 16,-6.2 Q30,-3.7 44.5,0 Q30,3.7 16,6.2 Q8,5.8 2.5,0Z" fill="#6ef84a"/><path transform="translate(1301.6,263.95) rotate(135)" d="M2.5,0 Q8,-5.8 16,-6.2 Q30,-3.7 44.5,0 Q30,3.7 16,6.2 Q8,5.8 2.5,0Z" fill="#6ef84a"/><path transform="translate(1301.6,263.95) rotate(225)" d="M2.5,0 Q8,-5.8 16,-6.2 Q30,-3.7 44.5,0 Q30,3.7 16,6.2 Q8,5.8 2.5,0Z" fill="#6ef84a"/><path transform="translate(1301.6,263.95) rotate(315)" d="M2.5,0 Q8,-5.8 16,-6.2 Q30,-3.7 44.5,0 Q30,3.7 16,6.2 Q8,5.8 2.5,0Z" fill="#6ef84a"/><polygon transform="translate(1301.6,263.95) rotate(0)" points="1.5,-0.9 7.2,-1.1 7.6,-2.2 11.6,-2.2 12,-3.5 19.2,-3.5 19.6,-2.2 26.2,-2.2 26.6,-0.95 31.6,-0.95 31.6,0.95 26.6,0.95 26.2,2.2 19.6,2.2 19.2,3.5 12,3.5 11.6,2.2 7.6,2.2 7.2,1.1 1.5,0.9" fill="#6ef84a"/><polygon transform="translate(1301.6,263.95) rotate(90)" points="1.5,-0.9 7.2,-1.1 7.6,-2.2 11.6,-2.2 12,-3.5 19.2,-3.5 19.6,-2.2 26.2,-2.2 26.6,-0.95 31.6,-0.95 31.6,0.95 26.6,0.95 26.2,2.2 19.6,2.2 19.2,3.5 12,3.5 11.6,2.2 7.6,2.2 7.2,1.1 1.5,0.9" fill="#6ef84a"/><polygon transform="translate(1301.6,263.95) rotate(180)" points="1.5,-0.9 7.2,-1.1 7.6,-2.2 11.6,-2.2 12,-3.5 19.2,-3.5 19.6,-2.2 26.2,-2.2 26.6,-0.95 31.6,-0.95 31.6,0.95 26.6,0.95 26.2,2.2 19.6,2.2 19.2,3.5 12,3.5 11.6,2.2 7.6,2.2 7.2,1.1 1.5,0.9" fill="#6ef84a"/><polygon transform="translate(1301.6,263.95) rotate(270)" points="1.5,-0.9 7.2,-1.1 7.6,-2.2 11.6,-2.2 12,-3.5 19.2,-3.5 19.6,-2.2 26.2,-2.2 26.6,-0.95 31.6,-0.95 31.6,0.95 26.6,0.95 26.2,2.2 19.6,2.2 19.2,3.5 12,3.5 11.6,2.2 7.6,2.2 7.2,1.1 1.5,0.9" fill="#6ef84a"/></svg>
<div class="b" style="left:1232px;top:302.1px;width:139px;text-align:center;">Green-2</div>
<div style="left:1230.8px;top:322.6px;width:141.4px;height:93.55px;background:#c0c0c0;border:2.7px solid #000"></div>
<svg style="left:0;top:0" width="1382" height="1008"><path transform="translate(1301.6,357.40000000000003) rotate(45)" d="M2.5,0 Q8,-5.8 16,-6.2 Q30,-3.7 44.5,0 Q30,3.7 16,6.2 Q8,5.8 2.5,0Z" fill="#ea3323"/><path transform="translate(1301.6,357.40000000000003) rotate(135)" d="M2.5,0 Q8,-5.8 16,-6.2 Q30,-3.7 44.5,0 Q30,3.7 16,6.2 Q8,5.8 2.5,0Z" fill="#ea3323"/><path transform="translate(1301.6,357.40000000000003) rotate(225)" d="M2.5,0 Q8,-5.8 16,-6.2 Q30,-3.7 44.5,0 Q30,3.7 16,6.2 Q8,5.8 2.5,0Z" fill="#ea3323"/><path transform="translate(1301.6,357.40000000000003) rotate(315)" d="M2.5,0 Q8,-5.8 16,-6.2 Q30,-3.7 44.5,0 Q30,3.7 16,6.2 Q8,5.8 2.5,0Z" fill="#ea3323"/><polygon transform="translate(1301.6,357.40000000000003) rotate(0)" points="1.5,-0.9 7.2,-1.1 7.6,-2.2 11.6,-2.2 12,-3.5 19.2,-3.5 19.6,-2.2 26.2,-2.2 26.6,-0.95 31.6,-0.95 31.6,0.95 26.6,0.95 26.2,2.2 19.6,2.2 19.2,3.5 12,3.5 11.6,2.2 7.6,2.2 7.2,1.1 1.5,0.9" fill="#ea3323"/><polygon transform="translate(1301.6,357.40000000000003) rotate(90)" points="1.5,-0.9 7.2,-1.1 7.6,-2.2 11.6,-2.2 12,-3.5 19.2,-3.5 19.6,-2.2 26.2,-2.2 26.6,-0.95 31.6,-0.95 31.6,0.95 26.6,0.95 26.2,2.2 19.6,2.2 19.2,3.5 12,3.5 11.6,2.2 7.6,2.2 7.2,1.1 1.5,0.9" fill="#ea3323"/><polygon transform="translate(1301.6,357.40000000000003) rotate(180)" points="1.5,-0.9 7.2,-1.1 7.6,-2.2 11.6,-2.2 12,-3.5 19.2,-3.5 19.6,-2.2 26.2,-2.2 26.6,-0.95 31.6,-0.95 31.6,0.95 26.6,0.95 26.2,2.2 19.6,2.2 19.2,3.5 12,3.5 11.6,2.2 7.6,2.2 7.2,1.1 1.5,0.9" fill="#ea3323"/><polygon transform="translate(1301.6,357.40000000000003) rotate(270)" points="1.5,-0.9 7.2,-1.1 7.6,-2.2 11.6,-2.2 12,-3.5 19.2,-3.5 19.6,-2.2 26.2,-2.2 26.6,-0.95 31.6,-0.95 31.6,0.95 26.6,0.95 26.2,2.2 19.6,2.2 19.2,3.5 12,3.5 11.6,2.2 7.6,2.2 7.2,1.1 1.5,0.9" fill="#ea3323"/></svg>
<div class="b" style="left:1232px;top:395.6px;width:139px;text-align:center;">Red</div>
<div style="left:1230.8px;top:416.05px;width:141.4px;height:93.55px;background:#c0c0c0;border:2.7px solid #000"></div>
<svg style="left:0;top:0" width="1382" height="1008"><path transform="translate(1301.6,450.85) rotate(45)" d="M2.5,0 Q8,-5.8 16,-6.2 Q30,-3.7 44.5,0 Q30,3.7 16,6.2 Q8,5.8 2.5,0Z" fill="#ffffff"/><path transform="translate(1301.6,450.85) rotate(135)" d="M2.5,0 Q8,-5.8 16,-6.2 Q30,-3.7 44.5,0 Q30,3.7 16,6.2 Q8,5.8 2.5,0Z" fill="#ffffff"/><path transform="translate(1301.6,450.85) rotate(225)" d="M2.5,0 Q8,-5.8 16,-6.2 Q30,-3.7 44.5,0 Q30,3.7 16,6.2 Q8,5.8 2.5,0Z" fill="#ffffff"/><path transform="translate(1301.6,450.85) rotate(315)" d="M2.5,0 Q8,-5.8 16,-6.2 Q30,-3.7 44.5,0 Q30,3.7 16,6.2 Q8,5.8 2.5,0Z" fill="#ffffff"/><polygon transform="translate(1301.6,450.85) rotate(0)" points="1.5,-0.9 7.2,-1.1 7.6,-2.2 11.6,-2.2 12,-3.5 19.2,-3.5 19.6,-2.2 26.2,-2.2 26.6,-0.95 31.6,-0.95 31.6,0.95 26.6,0.95 26.2,2.2 19.6,2.2 19.2,3.5 12,3.5 11.6,2.2 7.6,2.2 7.2,1.1 1.5,0.9" fill="#ffffff"/><polygon transform="translate(1301.6,450.85) rotate(90)" points="1.5,-0.9 7.2,-1.1 7.6,-2.2 11.6,-2.2 12,-3.5 19.2,-3.5 19.6,-2.2 26.2,-2.2 26.6,-0.95 31.6,-0.95 31.6,0.95 26.6,0.95 26.2,2.2 19.6,2.2 19.2,3.5 12,3.5 11.6,2.2 7.6,2.2 7.2,1.1 1.5,0.9" fill="#ffffff"/><polygon transform="translate(1301.6,450.85) rotate(180)" points="1.5,-0.9 7.2,-1.1 7.6,-2.2 11.6,-2.2 12,-3.5 19.2,-3.5 19.6,-2.2 26.2,-2.2 26.6,-0.95 31.6,-0.95 31.6,0.95 26.6,0.95 26.2,2.2 19.6,2.2 19.2,3.5 12,3.5 11.6,2.2 7.6,2.2 7.2,1.1 1.5,0.9" fill="#ffffff"/><polygon transform="translate(1301.6,450.85) rotate(270)" points="1.5,-0.9 7.2,-1.1 7.6,-2.2 11.6,-2.2 12,-3.5 19.2,-3.5 19.6,-2.2 26.2,-2.2 26.6,-0.95 31.6,-0.95 31.6,0.95 26.6,0.95 26.2,2.2 19.6,2.2 19.2,3.5 12,3.5 11.6,2.2 7.6,2.2 7.2,1.1 1.5,0.9" fill="#ffffff"/></svg>
<div class="b" style="left:1232px;top:489.1px;width:139px;text-align:center;">White</div>
<div style="left:1230.8px;top:509.5px;width:141.4px;height:93.55px;background:#c0c0c0;border:2.7px solid #000"></div>
<svg style="left:0;top:0" width="1382" height="1008"><path transform="translate(1301.6,544.3) rotate(45)" d="M2.5,0 Q8,-5.8 16,-6.2 Q30,-3.7 44.5,0 Q30,3.7 16,6.2 Q8,5.8 2.5,0Z" fill="#ffff55"/><path transform="translate(1301.6,544.3) rotate(135)" d="M2.5,0 Q8,-5.8 16,-6.2 Q30,-3.7 44.5,0 Q30,3.7 16,6.2 Q8,5.8 2.5,0Z" fill="#ffff55"/><path transform="translate(1301.6,544.3) rotate(225)" d="M2.5,0 Q8,-5.8 16,-6.2 Q30,-3.7 44.5,0 Q30,3.7 16,6.2 Q8,5.8 2.5,0Z" fill="#ffff55"/><path transform="translate(1301.6,544.3) rotate(315)" d="M2.5,0 Q8,-5.8 16,-6.2 Q30,-3.7 44.5,0 Q30,3.7 16,6.2 Q8,5.8 2.5,0Z" fill="#ffff55"/><polygon transform="translate(1301.6,544.3) rotate(0)" points="1.5,-0.9 7.2,-1.1 7.6,-2.2 11.6,-2.2 12,-3.5 19.2,-3.5 19.6,-2.2 26.2,-2.2 26.6,-0.95 31.6,-0.95 31.6,0.95 26.6,0.95 26.2,2.2 19.6,2.2 19.2,3.5 12,3.5 11.6,2.2 7.6,2.2 7.2,1.1 1.5,0.9" fill="#ffff55"/><polygon transform="translate(1301.6,544.3) rotate(90)" points="1.5,-0.9 7.2,-1.1 7.6,-2.2 11.6,-2.2 12,-3.5 19.2,-3.5 19.6,-2.2 26.2,-2.2 26.6,-0.95 31.6,-0.95 31.6,0.95 26.6,0.95 26.2,2.2 19.6,2.2 19.2,3.5 12,3.5 11.6,2.2 7.6,2.2 7.2,1.1 1.5,0.9" fill="#ffff55"/><polygon transform="translate(1301.6,544.3) rotate(180)" points="1.5,-0.9 7.2,-1.1 7.6,-2.2 11.6,-2.2 12,-3.5 19.2,-3.5 19.6,-2.2 26.2,-2.2 26.6,-0.95 31.6,-0.95 31.6,0.95 26.6,0.95 26.2,2.2 19.6,2.2 19.2,3.5 12,3.5 11.6,2.2 7.6,2.2 7.2,1.1 1.5,0.9" fill="#ffff55"/><polygon transform="translate(1301.6,544.3) rotate(270)" points="1.5,-0.9 7.2,-1.1 7.6,-2.2 11.6,-2.2 12,-3.5 19.2,-3.5 19.6,-2.2 26.2,-2.2 26.6,-0.95 31.6,-0.95 31.6,0.95 26.6,0.95 26.2,2.2 19.6,2.2 19.2,3.5 12,3.5 11.6,2.2 7.6,2.2 7.2,1.1 1.5,0.9" fill="#ffff55"/></svg>
<div class="b" style="left:1232px;top:582.5px;width:139px;text-align:center;">white</div>
<div style="left:1230.8px;top:602.95px;width:141.4px;height:93.55px;background:#c0c0c0;border:2.7px solid #000"></div>
<svg style="left:0;top:0" width="1382" height="1008"><path transform="translate(1301.6,637.75) rotate(45)" d="M2.5,0 Q8,-5.8 16,-6.2 Q30,-3.7 44.5,0 Q30,3.7 16,6.2 Q8,5.8 2.5,0Z" fill="#7e3adb"/><path transform="translate(1301.6,637.75) rotate(135)" d="M2.5,0 Q8,-5.8 16,-6.2 Q30,-3.7 44.5,0 Q30,3.7 16,6.2 Q8,5.8 2.5,0Z" fill="#7e3adb"/><path transform="translate(1301.6,637.75) rotate(225)" d="M2.5,0 Q8,-5.8 16,-6.2 Q30,-3.7 44.5,0 Q30,3.7 16,6.2 Q8,5.8 2.5,0Z" fill="#7e3adb"/><path transform="translate(1301.6,637.75) rotate(315)" d="M2.5,0 Q8,-5.8 16,-6.2 Q30,-3.7 44.5,0 Q30,3.7 16,6.2 Q8,5.8 2.5,0Z" fill="#7e3adb"/><polygon transform="translate(1301.6,637.75) rotate(0)" points="1.5,-0.9 7.2,-1.1 7.6,-2.2 11.6,-2.2 12,-3.5 19.2,-3.5 19.6,-2.2 26.2,-2.2 26.6,-0.95 31.6,-0.95 31.6,0.95 26.6,0.95 26.2,2.2 19.6,2.2 19.2,3.5 12,3.5 11.6,2.2 7.6,2.2 7.2,1.1 1.5,0.9" fill="#7e3adb"/><polygon transform="translate(1301.6,637.75) rotate(90)" points="1.5,-0.9 7.2,-1.1 7.6,-2.2 11.6,-2.2 12,-3.5 19.2,-3.5 19.6,-2.2 26.2,-2.2 26.6,-0.95 31.6,-0.95 31.6,0.95 26.6,0.95 26.2,2.2 19.6,2.2 19.2,3.5 12,3.5 11.6,2.2 7.6,2.2 7.2,1.1 1.5,0.9" fill="#7e3adb"/><polygon transform="translate(1301.6,637.75) rotate(180)" points="1.5,-0.9 7.2,-1.1 7.6,-2.2 11.6,-2.2 12,-3.5 19.2,-3.5 19.6,-2.2 26.2,-2.2 26.6,-0.95 31.6,-0.95 31.6,0.95 26.6,0.95 26.2,2.2 19.6,2.2 19.2,3.5 12,3.5 11.6,2.2 7.6,2.2 7.2,1.1 1.5,0.9" fill="#7e3adb"/><polygon transform="translate(1301.6,637.75) rotate(270)" points="1.5,-0.9 7.2,-1.1 7.6,-2.2 11.6,-2.2 12,-3.5 19.2,-3.5 19.6,-2.2 26.2,-2.2 26.6,-0.95 31.6,-0.95 31.6,0.95 26.6,0.95 26.2,2.2 19.6,2.2 19.2,3.5 12,3.5 11.6,2.2 7.6,2.2 7.2,1.1 1.5,0.9" fill="#7e3adb"/></svg>
<div class="b" style="left:1232px;top:676.0px;width:139px;text-align:center;letter-spacing:-0.33px;">PURPLE</div>
<div style="left:1230.8px;top:696.4000000000001px;width:141.4px;height:93.55px;background:#c0c0c0;border:2.7px solid #6cf04a"></div>
<svg style="left:0;top:0" width="1382" height="1008"><path transform="translate(1301.6,731.2) rotate(45)" d="M2.5,0 Q8,-5.8 16,-6.2 Q30,-3.7 44.5,0 Q30,3.7 16,6.2 Q8,5.8 2.5,0Z" fill="#7e3adb"/><path transform="translate(1301.6,731.2) rotate(135)" d="M2.5,0 Q8,-5.8 16,-6.2 Q30,-3.7 44.5,0 Q30,3.7 16,6.2 Q8,5.8 2.5,0Z" fill="#7e3adb"/><path transform="translate(1301.6,731.2) rotate(225)" d="M2.5,0 Q8,-5.8 16,-6.2 Q30,-3.7 44.5,0 Q30,3.7 16,6.2 Q8,5.8 2.5,0Z" fill="#7e3adb"/><path transform="translate(1301.6,731.2) rotate(315)" d="M2.5,0 Q8,-5.8 16,-6.2 Q30,-3.7 44.5,0 Q30,3.7 16,6.2 Q8,5.8 2.5,0Z" fill="#7e3adb"/><polygon transform="translate(1301.6,731.2) rotate(0)" points="1.5,-0.9 7.2,-1.1 7.6,-2.2 11.6,-2.2 12,-3.5 19.2,-3.5 19.6,-2.2 26.2,-2.2 26.6,-0.95 31.6,-0.95 31.6,0.95 26.6,0.95 26.2,2.2 19.6,2.2 19.2,3.5 12,3.5 11.6,2.2 7.6,2.2 7.2,1.1 1.5,0.9" fill="#7e3adb"/><polygon transform="translate(1301.6,731.2) rotate(90)" points="1.5,-0.9 7.2,-1.1 7.6,-2.2 11.6,-2.2 12,-3.5 19.2,-3.5 19.6,-2.2 26.2,-2.2 26.6,-0.95 31.6,-0.95 31.6,0.95 26.6,0.95 26.2,2.2 19.6,2.2 19.2,3.5 12,3.5 11.6,2.2 7.6,2.2 7.2,1.1 1.5,0.9" fill="#7e3adb"/><polygon transform="translate(1301.6,731.2) rotate(180)" points="1.5,-0.9 7.2,-1.1 7.6,-2.2 11.6,-2.2 12,-3.5 19.2,-3.5 19.6,-2.2 26.2,-2.2 26.6,-0.95 31.6,-0.95 31.6,0.95 26.6,0.95 26.2,2.2 19.6,2.2 19.2,3.5 12,3.5 11.6,2.2 7.6,2.2 7.2,1.1 1.5,0.9" fill="#7e3adb"/><polygon transform="translate(1301.6,731.2) rotate(270)" points="1.5,-0.9 7.2,-1.1 7.6,-2.2 11.6,-2.2 12,-3.5 19.2,-3.5 19.6,-2.2 26.2,-2.2 26.6,-0.95 31.6,-0.95 31.6,0.95 26.6,0.95 26.2,2.2 19.6,2.2 19.2,3.5 12,3.5 11.6,2.2 7.6,2.2 7.2,1.1 1.5,0.9" fill="#7e3adb"/></svg>
<div class="b" style="left:1232px;top:769.4px;width:139px;text-align:center;letter-spacing:-0.33px;">PURE PURPLE</div>
<svg style="left:958.3px;top:667.3px" width="18" height="26" viewBox="0 0 18 26"><polygon points="0.4,0.6 0.4,20.6 4.8,16.4 8,23.8 10.9,22.5 7.8,15.3 14.6,14.9" fill="#fff" stroke="#666" stroke-width="1"/></svg>
<div style="left:25.3px;top:980.5px;width:187px;height:21.8px;background:#eeeeee;border:1.6px solid #7c8a9a;box-shadow:inset 1px 1px 0 #dfe8f0"></div>
<div class="b" style="left:237px;top:984px;">Ready</div>
<div class="b" style="left:1178px;top:984px;">No sequences folded yet</div>
</body></html>
